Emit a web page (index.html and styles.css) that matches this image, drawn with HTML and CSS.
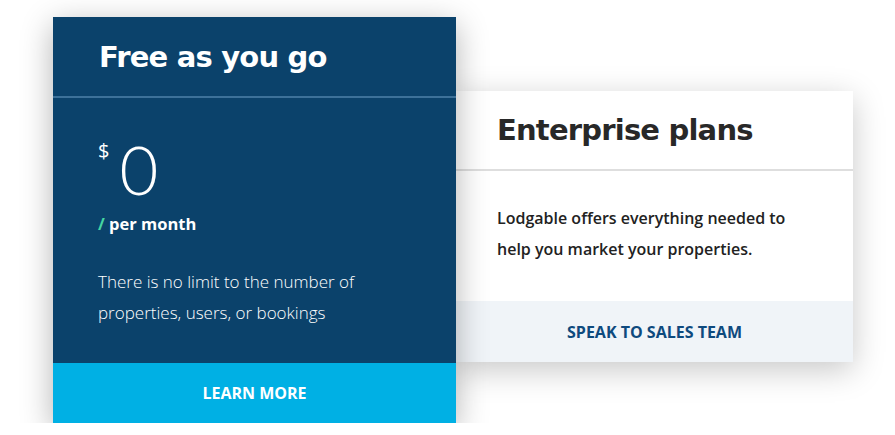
FILE: index.html
```html
<!DOCTYPE html>
<html lang="en">

<head>
    <meta charset="utf-8">
    <meta name="viewport" content="width=device-width, initial-scale=1.0">
    <title>Pricing</title>
    <link rel="stylesheet" href="styles.css">
</head>

<body>
    <section class="priser">
        <article class="kort kort-gratis">
            <header class="kort-top">
                <h2>Free as you go</h2>
            </header>
            <div class="kort-indhold">
                <p class="pris"><span class="valuta">$</span><span class="beloeb">0</span></p>
                <p class="periode"><span class="skraa">/</span> per month</p>
                <p class="beskrivelse">There is no limit to the number of properties, users, or bookings</p>
            </div>
            <a class="kort-knap" href="#">LEARN MORE</a>
        </article>

        <article class="kort kort-firma">
            <header class="kort-top">
                <h2>Enterprise plans</h2>
            </header>
            <div class="kort-indhold">
                <p class="beskrivelse">Lodgable offers everything needed to help you market your properties.</p>
            </div>
            <a class="kort-knap" href="#">SPEAK TO SALES TEAM</a>
        </article>
    </section>
</body>

</html>
```

FILE: styles.css
```css
* {
    box-sizing: border-box;
}

body {
    margin: 0;
    background-color: #ffffff;
    font-family: 'Open Sans', sans-serif;
}

p {
    margin: 0;
}

h2 {
    margin: 0;
    font-family: 'DejaVu Sans', sans-serif;
    font-weight: bold;
    font-size: 29px;
    letter-spacing: -0.8px;
}

.priser {
    display: flex;
    align-items: flex-start;
    padding: 17px 0 0 53px;
}

.kort {
    display: flex;
    flex-direction: column;
}

.kort-top {
    display: flex;
    align-items: center;
}

.kort-knap {
    display: flex;
    align-items: center;
    justify-content: center;
    font-weight: bold;
    font-size: 16px;
    text-decoration: none;
}

/* venstre kort */

.kort-gratis {
    position: relative;
    z-index: 2;
    width: 403px;
    background-color: #0b426b;
    color: #ffffff;
    box-shadow: 0 8px 30px rgba(0, 0, 0, 0.3);
}

.kort-gratis .kort-top {
    height: 81px;
    padding: 0 46px 0;
    border-bottom: 2px solid #3d7199;
}

.kort-gratis .kort-indhold {
    height: 265px;
    padding: 38px 46px 0 45px;
}

.pris {
    display: flex;
    align-items: flex-start;
    line-height: 1;
}

.valuta {
    font-size: 20px;
    margin: 5px 10px 0 0;
}

.beloeb {
    font-family: 'Lato', sans-serif;
    font-weight: 300;
    font-size: 67px;
    line-height: 66px;
}

.periode {
    margin-top: 10px;
    font-weight: bold;
    font-size: 16.5px;
}

.skraa {
    color: #45d6a2;
}

.kort-gratis .beskrivelse {
    margin-top: 31px;
    font-weight: 300;
    font-size: 17px;
    line-height: 31px;
    width: 300px;
}

.kort-gratis .kort-knap {
    height: 60px;
    background-color: #00b0e4;
    color: #ffffff;
}

/* højre kort */

.kort-firma {
    z-index: 1;
    width: 397px;
    margin-top: 74px;
    background-color: #ffffff;
    box-shadow: 0 8px 30px rgba(0, 0, 0, 0.22);
}

.kort-firma .kort-top {
    height: 80px;
    padding: 0 41px;
    border-bottom: 2px solid #dedede;
    color: #282828;
}

.kort-firma .kort-indhold {
    height: 130px;
    padding: 32px 41px 0;
}

.kort-firma .beskrivelse {
    font-weight: 600;
    font-size: 16px;
    line-height: 31px;
    color: #222222;
}

.kort-firma .kort-knap {
    height: 61px;
    background-color: #f0f4f8;
    color: #0e4a7e;
}
```
